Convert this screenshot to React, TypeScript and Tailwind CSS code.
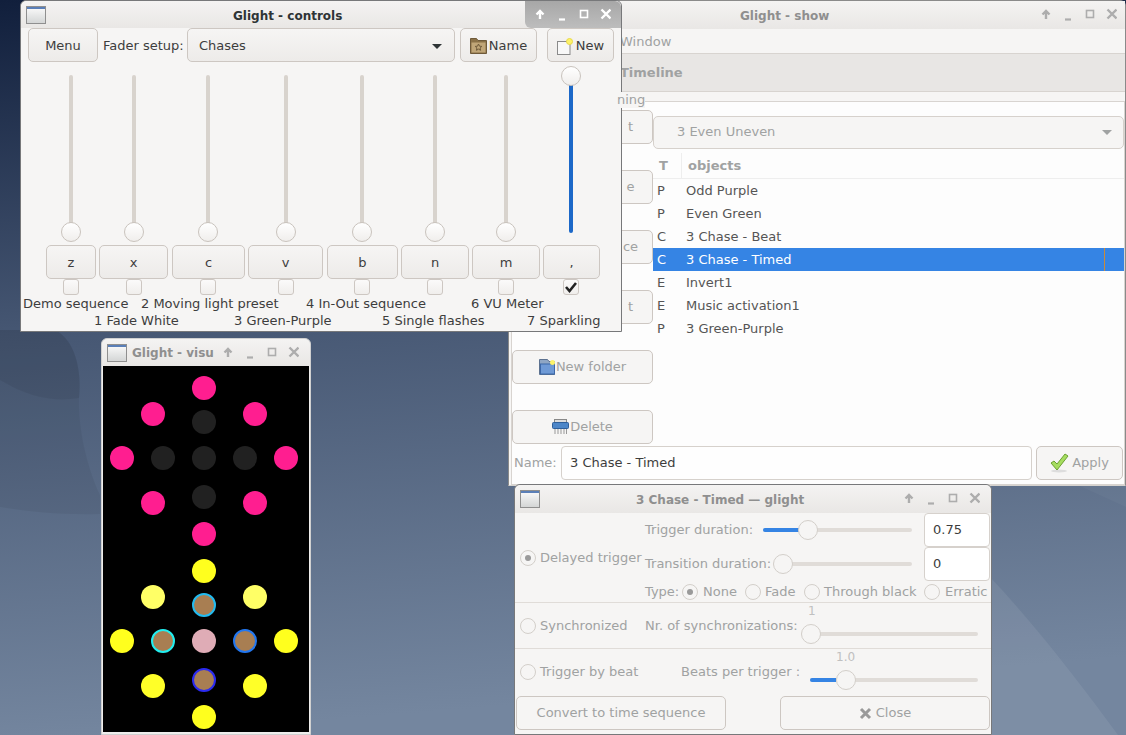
import React from "react";

const font = { fontFamily: '"DejaVu Sans", sans-serif' };

function WinIcon() {
  return (
    <div className="w-[20px] h-[18px] border border-[#8f8f8f] bg-gradient-to-b from-[#fbfbfb] to-[#d4d6d6] relative shrink-0">
      <div className="absolute top-0 left-0 right-0 h-[2px] bg-[#5a7fb8]" />
    </div>
  );
}

function WinButtons({ color }: { color: string }) {
  return (
    <svg width="76" height="16" viewBox="0 0 76 16" className="shrink-0" fill="none" stroke={color}>
      <path d="M5 12V4M1.5 7.5L5 4l3.5 3.5" strokeWidth="2.4" />
      <path d="M24 12.5h6" strokeWidth="2.2" />
      <rect x="45.5" y="3.5" width="7" height="7" strokeWidth="1.6" />
      <path d="M66.5 2.5l9 9M75.5 2.5l-9 9" strokeWidth="2.4" />
    </svg>
  );
}

function Btn({ className = "", children, dim }: { className?: string; children: React.ReactNode; dim?: boolean }) {
  return (
    <div
      className={
        "flex items-center justify-center rounded-[5px] border border-[#cdc7c2] text-[13px] h-[34px] shrink-0 " +
        (dim ? "bg-[#f6f5f4] text-[#a0a2a2] " : "bg-gradient-to-b from-[#f6f5f4] to-[#edebe9] text-[#3d3d3d] ") +
        className
      }
    >
      {children}
    </div>
  );
}

function Folder() {
  return (
    <svg width="17" height="16" viewBox="0 0 17 16" className="shrink-0">
      <path d="M0.5 0.5h6l1.5 2h8.5v13h-16z" fill="#8a7147" stroke="#6f5a3a" />
      <rect x="1.5" y="4.5" width="14" height="10" fill="#c0a678" />
      <path d="M8.5 6l1 2.2 2.3.2-1.7 1.6.5 2.3-2.1-1.2-2.1 1.2.5-2.3-1.7-1.6 2.3-.2z" fill="none" stroke="#6f5a3a" />
    </svg>
  );
}

function NewDoc() {
  return (
    <svg width="18" height="17" viewBox="0 0 18 17" className="shrink-0">
      <rect x="0.5" y="3.5" width="12.5" height="13" fill="#f8f8f8" stroke="#8a8a8a" />
      <circle cx="12.5" cy="3.5" r="3" fill="#fdf36a" stroke="#e8d84a" />
    </svg>
  );
}

function NewFolder() {
  return (
    <svg width="17" height="16" viewBox="0 0 17 16" className="shrink-0">
      <path d="M0.5 0.5h8l1.5 2h5.5v13h-15z" fill="#8fa6c4" stroke="#5d7290" />
      <rect x="1.5" y="5" width="14" height="10" fill="#6f9ad6" stroke="#3d68a8" />
      <circle cx="13.5" cy="3.5" r="2.5" fill="#fdf36a" />
    </svg>
  );
}

function Shredder() {
  return (
    <svg width="17" height="16" viewBox="0 0 17 16" className="shrink-0">
      <rect x="2.5" y="0.5" width="12" height="5" fill="#ddd" stroke="#888" />
      <rect x="0.5" y="3.5" width="16" height="6" rx="1" fill="#4d86c8" stroke="#2f5f9a" />
      <path d="M3 10v5M6 10v5M9 10v5M12 10v5M14.5 10v5" stroke="#999" strokeWidth="1" />
    </svg>
  );
}

function Check() {
  return (
    <svg width="20" height="20" viewBox="0 0 20 20" className="shrink-0">
      <ellipse cx="9" cy="18" rx="8" ry="1.5" fill="#ddd" />
      <path d="M1 10l3-2 3 3 8-10 3 2-11 14z" fill="#a6dd5f" stroke="#6ca032" />
    </svg>
  );
}

function CloseIcon() {
  return (
    <svg width="13" height="13" viewBox="0 0 13 13" className="shrink-0" stroke="#9a9a9a" fill="none">
      <path d="M2 2l9 9M11 2l-9 9" strokeWidth="3" />
    </svg>
  );
}

function Radio({ checked }: { checked?: boolean }) {
  return (
    <div className="w-[16px] h-[16px] rounded-full border border-[#d3cfca] bg-[#f6f5f4] flex items-center justify-center shrink-0">
      {checked && <div className="w-[6px] h-[6px] rounded-full bg-[#9a9a9a]" />}
    </div>
  );
}

function HSlider({ w, fill, knob }: { w: number; fill: number; knob: number }) {
  return (
    <div className="relative h-[20px] shrink-0" style={{ width: w }}>
      <div className="absolute left-0 right-0 top-[8px] h-[4px] rounded-full bg-[#e0dcd8]" />
      {fill > 0 && <div className="absolute left-0 top-[8px] h-[4px] rounded-l-full bg-[#3584e4]" style={{ width: fill }} />}
      <div className="absolute top-0 w-[20px] h-[20px] rounded-full border border-[#d3cfca] bg-[#f6f5f4]" style={{ left: knob }} />
    </div>
  );
}

const centers = [50, 113, 187, 265, 341, 414, 485, 550];

const faderButtons: [string, number, number][] = [
  ["z", 50, 3],
  ["x", 69, 4],
  ["c", 73, 3],
  ["v", 75, 4],
  ["b", 71, 3],
  ["n", 68, 3],
  ["m", 68, 3],
  [",", 57, 0],
];

const leds: [number, number, string][] = [
  [204, 388, "#ff1e90"],
  [153, 414, "#ff1e90"],
  [255, 414, "#ff1e90"],
  [204, 422, "#212121"],
  [122, 458, "#ff1e90"],
  [163, 458, "#212121"],
  [204, 458, "#212121"],
  [245, 458, "#212121"],
  [286, 458, "#ff1e90"],
  [204, 497, "#212121"],
  [153, 503, "#ff1e90"],
  [255, 503, "#ff1e90"],
  [204, 534, "#ff1e90"],
  [204, 571, "#ffff1e"],
  [153, 597, "#ffff66"],
  [255, 597, "#ffff66"],
  [122, 641, "#ffff1e"],
  [204, 641, "#dfacb6"],
  [286, 641, "#ffff1e"],
  [153, 686, "#ffff28"],
  [255, 686, "#ffff28"],
  [204, 717, "#ffff1e"],
];

const rings: [number, number, string][] = [
  [204, 605, "#22bbf0"],
  [163, 641, "#22eef0"],
  [245, 641, "#2277f0"],
  [204, 680, "#2a2af0"],
];

const rows = [
  ["P", "Odd Purple"],
  ["P", "Even Green"],
  ["C", "3 Chase - Beat"],
  ["C", "3 Chase - Timed"],
  ["E", "Invert1"],
  ["E", "Music activation1"],
  ["P", "3 Green-Purple"],
];

export default function App() {
  return (
    <div className="relative w-[1126px] h-[735px] overflow-hidden text-[13px]" style={font}>
      {/* wallpaper */}
      <svg className="absolute inset-0" width="1126" height="735" viewBox="0 0 1126 735">
        <defs>
          <linearGradient id="bg" x1="0" y1="0" x2="0.12" y2="1">
            <stop offset="0" stopColor="#111f3c" />
            <stop offset="0.45" stopColor="#465773" />
            <stop offset="1" stopColor="#74869f" />
          </linearGradient>
        </defs>
        <rect width="1126" height="735" fill="url(#bg)" />
        <path d="M0 330H55C75 340 82 370 79 398C78 430 88 470 100 495V514C60 515 30 512 0 507z" fill="#000000" opacity="0.05" />
        <path d="M0 330H55C75 340 82 370 79 398C55 402 30 398 0 380z" fill="#000000" opacity="0.06" />
        <path d="M990 577C1040 630 1085 690 1118 735H990z" fill="#ffffff" opacity="0.07" />
        <path d="M1080 486L1126 507V486z" fill="#ffffff" opacity="0.03" />
      </svg>

      {/* show window */}
      <div className="absolute left-[508px] top-0 w-[618px] h-[486px] rounded-t-[6px] border border-[#8a8a8a] border-b-[#d6d3cf] bg-[#f6f5f4] flex flex-col">
        <div className="h-[28px] shrink-0 flex items-center justify-end bg-gradient-to-b from-[#f4f3f2] to-[#e9e7e5] pr-[8px] relative">
          <span className="absolute left-[231px] top-[7px] font-bold text-[12px] leading-[16px] text-[#8f8f8f]">Glight - show</span>
          <WinButtons color="#adadad" />
        </div>
        <div className="h-[25px] shrink-0 pl-[111px] pt-[1px] flex items-center text-[#a0a2a2] border-b border-[#d8d4d0]">Window</div>
        <div className="h-[38px] shrink-0 pl-[111px] flex items-center font-bold text-[#a0a2a2] bg-[#e8e6e4] border-b border-[#d8d4d0]">Timeline</div>
        <div className="flex-1 relative pl-[2px] pt-[9px] flex flex-col min-h-0">
          <span className="absolute left-[108px] top-0 leading-[16px] bg-[#f6f5f4] text-[#a0a2a2] z-10">ning</span>
          <div className="flex-1 border border-[#d8d4d0] bg-[#fdfdfd] flex flex-col min-h-0">
            <div className="flex-1 flex min-h-0">
              <div className="w-[141px] shrink-0 flex flex-col pt-[8px] gap-[26px]">
                <Btn dim className="w-[141px]"><span className="ml-[96px]">t</span></Btn>
                <Btn dim className="w-[141px]"><span className="ml-[96px]">e</span></Btn>
                <Btn dim className="w-[141px]"><span className="ml-[96px]">ce</span></Btn>
                <Btn dim className="w-[141px]"><span className="ml-[96px]">t</span></Btn>
                <Btn dim className="w-[141px]"><NewFolder />New folder</Btn>
                <Btn dim className="w-[141px] gap-[1px]"><Shredder />Delete</Btn>
              </div>
              <div className="flex-1 min-w-0 flex flex-col pt-[14px]">
                <div className="h-[33px] rounded-[5px] border border-[#d6d1cc] bg-[#f6f5f4] text-[#a0a2a2] flex items-center justify-between pl-[23px] pr-[11px] pb-[2px] shrink-0">
                  <span>3 Even Uneven</span>
                  <svg width="10" height="5" viewBox="0 0 10 5" className="mt-[2px]"><path d="M0 0h10L5 5z" fill="#a0a2a2" /></svg>
                </div>
                <div className="h-[30px] pt-[4px] flex items-center font-bold text-[#a0a2a2] border-b border-[#eeeeee] shrink-0">
                  <span className="w-[29px] pl-[6px] border-r border-[#eeeeee] h-full flex items-center">T</span>
                  <span className="pl-[6px]">objects</span>
                </div>
                <div className="flex flex-col">
                  {rows.map(([t, n], i) => (
                    <div key={n} className={"h-[23px] flex items-center relative " + (i === 3 ? "bg-[#3584e4] text-white" : "text-[#555555]")}>
                      <span className="w-[33px] pl-[4px]">{t}</span>
                      <span>{n}</span>
                      {i === 3 && <div className="absolute right-[19px] top-0 bottom-0 w-[1px] bg-[#c98a3c]" />}
                    </div>
                  ))}
                </div>
              </div>
            </div>
            <div className="h-[34px] shrink-0 flex items-center pl-[2px] mt-[2px] mb-[4px]">
              <span className="text-[#a0a2a2] w-[47px] shrink-0">Name:</span>
              <div className="w-[471px] h-[34px] rounded-[4px] border border-[#d6d1cc] bg-[#fefefe] text-[#3d3d3d] flex items-center pl-[8px] shrink-0">3 Chase - Timed</div>
              <Btn dim className="w-[87px] gap-[2px] ml-[4px]"><Check />Apply</Btn>
            </div>
          </div>
        </div>
      </div>

      {/* controls window */}
      <div className="absolute left-[20px] top-0 w-[602px] h-[332px] rounded-t-[6px] border border-[#77787a] bg-[#f6f5f4] flex flex-col">
        <div className="h-[27px] shrink-0 flex items-center pl-[5px] bg-gradient-to-b from-[#f4f3f2] to-[#e9e7e5] relative rounded-t-[6px]">
          <WinIcon />
          <span className="absolute left-[212px] top-[7px] font-bold text-[12px] leading-[16px] text-[#2e3436]">Glight - controls</span>
          <div className="absolute right-0 top-0 h-[27px] w-[96px] rounded-bl-[6px] rounded-tr-[6px] bg-gradient-to-b from-[#a7a7a7] to-[#bdbdbd] flex items-center justify-center">
            <WinButtons color="#ffffff" />
          </div>
        </div>
        <div className="flex items-center pl-[7px]">
          <Btn className="w-[70px] pt-[2px]">Menu</Btn>
          <span className="text-[#3d3d3d] w-[81px] ml-[5px] pt-[2px] shrink-0 whitespace-nowrap">Fader setup:</span>
          <div className="w-[268px] h-[34px] ml-[3px] rounded-[5px] border border-[#cdc7c2] bg-gradient-to-b from-[#f6f5f4] to-[#edebe9] text-[#3d3d3d] flex items-center justify-between pl-[11px] pr-[12px] pt-[2px] shrink-0">
            <span>Chases</span>
            <svg width="10" height="5" viewBox="0 0 10 5"><path d="M0 0h10L5 5z" fill="#2e3436" /></svg>
          </div>
          <Btn className="w-[77px] gap-[2px] ml-[5px] pt-[2px]"><Folder />Name</Btn>
          <Btn className="w-[67px] gap-[1px] ml-[10px] pt-[2px]"><NewDoc />New</Btn>
        </div>
        <div className="relative">
          {centers.map((c, i) => {
            const last = i === 7;
            return (
              <div key={c} className="absolute top-[4px] w-[20px] h-[176px]" style={{ left: c - 10 }}>
                {last ? (
                  <>
                    <div className="absolute left-[8px] top-[17px] bottom-[9px] w-[4px] rounded-b-full bg-[#1c68c8]" />
                    <div className="absolute left-0 top-0 w-[20px] h-[20px] rounded-full border border-[#c9c3bd] bg-gradient-to-b from-[#ffffff] to-[#f0eeec]" />
                  </>
                ) : (
                  <>
                    <div className="absolute left-[8px] top-[9px] bottom-[10px] w-[4px] rounded-t-full bg-[#d8d3cd]" />
                    <div className="absolute left-0 bottom-0 w-[20px] h-[20px] rounded-full border border-[#c9c3bd] bg-gradient-to-b from-[#ffffff] to-[#f0eeec]" />
                  </>
                )}
              </div>
            );
          })}
        </div>
        <div className="mt-auto flex flex-col pb-[3px]">
          <div className="flex pl-[25px]">
            {faderButtons.map(([n, w, g]) => (
              <div key={n} style={{ width: w, marginRight: g }} className="h-[34px] pt-[2px] rounded-[5px] border border-[#cdc7c2] bg-gradient-to-b from-[#f6f5f4] to-[#edebe9] text-[#3d3d3d] flex items-center justify-center shrink-0">
                {n}
              </div>
            ))}
          </div>
          <div className="relative h-[16px]">
            {centers.map((c, i) => (
              <div key={c} className="absolute top-0 w-[16px] h-[16px] rounded-[3px] border border-[#cdc7c2] bg-gradient-to-b from-[#fbfafa] to-[#f0eeec] flex items-center justify-center" style={{ left: c - 8 }}>
                {i === 7 && (
                  <svg width="12" height="11" viewBox="0 0 12 11" fill="none" stroke="#222" strokeWidth="2.6"><path d="M1 5l3.5 4L11 1" /></svg>
                )}
              </div>
            ))}
          </div>
          <div className="relative h-[33px] text-[#3d3d3d] leading-[17px]">
            <span className="absolute left-[2px] top-0">Demo sequence</span>
            <span className="absolute left-[120px] top-0">2 Moving light preset</span>
            <span className="absolute left-[285px] top-0">4 In-Out sequence</span>
            <span className="absolute left-[450px] top-0">6 VU Meter</span>
            <span className="absolute left-[73px] top-[17px]">1 Fade White</span>
            <span className="absolute left-[213px] top-[17px]">3 Green-Purple</span>
            <span className="absolute left-[361px] top-[17px]">5 Single flashes</span>
            <span className="absolute left-[506px] top-[17px]">7 Sparkling</span>
          </div>
        </div>
      </div>

      {/* visu window */}
      <div className="absolute left-[101px] top-[338px] w-[210px] h-[397px] rounded-t-[6px] border border-[#d0d0d0] bg-[#eeedec] flex flex-col">
        <div className="h-[27px] shrink-0 flex items-center pl-[5px] gap-[5px] bg-gradient-to-b from-[#f4f3f2] to-[#e9e7e5] rounded-t-[6px]">
          <WinIcon />
          <span className="font-bold text-[12px] text-[#8f8f8f] w-[83px] whitespace-nowrap">Glight - visu</span>
          <div className="ml-[3px]"><WinButtons color="#adadad" /></div>
        </div>
        <div className="flex-1 mx-[1px] mb-[2px] bg-black" />
      </div>
      {leds.map(([x, y, c], i) => (
        <div key={i} className="absolute w-[24px] h-[24px] rounded-full" style={{ left: x - 12, top: y - 12, background: c }} />
      ))}
      {rings.map(([x, y, c], i) => (
        <div key={i} className="absolute w-[24px] h-[24px] rounded-full border-[2px] bg-[#a87e52]" style={{ left: x - 12, top: y - 12, borderColor: c }} />
      ))}

      {/* trigger window */}
      <div className="absolute left-[514px] top-[484px] w-[478px] h-[251px] rounded-t-[6px] border border-[#77787a] bg-[#f6f5f4] flex flex-col text-[#a0a2a2]">
        <div className="h-[28px] shrink-0 flex items-center justify-between pl-[5px] pr-[11px] bg-gradient-to-b from-[#f4f3f2] to-[#e9e7e5] relative rounded-t-[6px]">
          <WinIcon />
          <span className="absolute left-[121px] top-[7px] font-bold text-[12px] leading-[16px] text-[#8f8f8f]">3 Chase - Timed — glight</span>
          <WinButtons color="#adadad" />
        </div>
        <div className="flex h-[90px] shrink-0 border-b border-[#e0dcd8]">
          <div className="w-[130px] shrink-0 flex items-center pl-[5px] gap-[4px] whitespace-nowrap">
            <Radio checked />
            <span>Delayed trigger</span>
          </div>
          <div className="flex-1 flex flex-col whitespace-nowrap">
            <div className="flex items-center h-[34px]">
              <span className="w-[118px] shrink-0">Trigger duration:</span>
              <HSlider w={149} fill={36} knob={35} />
              <div className="ml-[12px] w-[66px] h-[34px] rounded-[4px] border border-[#d6d1cc] bg-white text-[#3d3d3d] flex items-center pl-[8px]">0.75</div>
            </div>
            <div className="flex items-center h-[34px]">
              <span className="w-[128px] shrink-0">Transition duration:</span>
              <HSlider w={139} fill={0} knob={0} />
              <div className="ml-[12px] w-[66px] h-[34px] rounded-[4px] border border-[#d6d1cc] bg-white text-[#3d3d3d] flex items-center pl-[8px]">0</div>
            </div>
            <div className="flex items-center h-[21px]">
              <span className="w-[37px] shrink-0">Type:</span>
              <Radio checked />
              <span className="w-[42px] ml-[5px] shrink-0">None</span>
              <Radio />
              <span className="w-[39px] ml-[4px] shrink-0">Fade</span>
              <Radio />
              <span className="w-[100px] ml-[4px] shrink-0">Through black</span>
              <Radio />
              <span className="ml-[5px]">Erratic</span>
            </div>
          </div>
        </div>
        <div className="flex items-center h-[46px] shrink-0 border-b border-[#e0dcd8] pl-[5px] relative whitespace-nowrap">
          <Radio />
          <span className="ml-[4px] w-[105px] shrink-0">Synchronized</span>
          <span className="w-[156px] shrink-0">Nr. of synchronizations:</span>
          <div className="absolute left-[293px] top-0 text-[12px] leading-[16px] text-[#c0c0c0]">1</div>
          <div className="mt-[16px]"><HSlider w={177} fill={0} knob={0} /></div>
        </div>
        <div className="flex items-center h-[45px] shrink-0 pl-[5px] relative whitespace-nowrap">
          <Radio />
          <span className="ml-[4px] w-[141px] shrink-0">Trigger by beat</span>
          <span className="w-[129px] shrink-0">Beats per trigger :</span>
          <div className="absolute left-[321px] top-0 text-[12px] leading-[16px] text-[#c0c0c0]">1.0</div>
          <div className="mt-[16px]"><HSlider w={168} fill={26} knob={26} /></div>
        </div>
        <div className="flex justify-between px-[1px] mt-[2px]">
          <Btn dim className="w-[210px]">Convert to time sequence</Btn>
          <Btn dim className="w-[210px] gap-[4px]"><CloseIcon />Close</Btn>
        </div>
      </div>
    </div>
  );
}
